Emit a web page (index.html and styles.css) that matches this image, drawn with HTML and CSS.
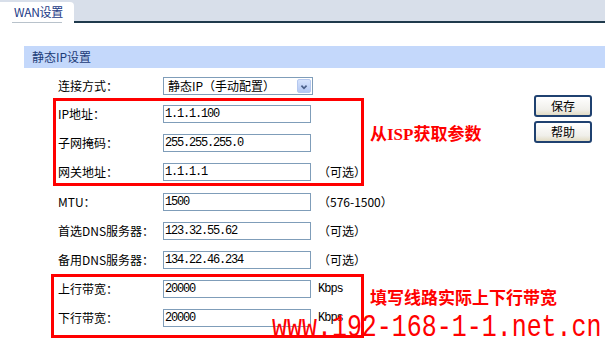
FILE: index.html
```html
<!DOCTYPE html>
<html lang="zh-CN">
<head>
    <meta charset="UTF-8">
    <meta name="viewport" content="width=device-width, initial-scale=1.0">
    <title>WAN设置</title>
    <link rel="stylesheet" href="styles.css">
</head>
<body>
    <div class="tabbar">
        <div class="tab"><span class="tab-label">WAN设置</span></div>
    </div>

    <div class="panel">
        <div class="panel-title">静态IP设置</div>

        <div class="panel-body">
            <div class="form">
                <div class="row">
                    <span class="row-label">连接方式：</span>
                    <div class="select">
                        <span class="select-text">静态IP（手动配置）</span>
                        <span class="select-btn">
                            <svg width="14" height="14" viewBox="0 0 14 14">
                                <polyline points="4,5.5 7,8.5 10,5.5" fill="none" stroke="#4a5f88" stroke-width="2"/>
                            </svg>
                        </span>
                    </div>
                </div>

                <!-- values handed out by the ISP -->
                <div class="group-line">
                    <div class="mark mark-isp">
                        <div class="row">
                            <span class="row-label">IP地址：</span>
                            <input class="field" type="text" value="1.1.1.100">
                        </div>
                        <div class="row">
                            <span class="row-label">子网掩码：</span>
                            <input class="field" type="text" value="255.255.255.0">
                        </div>
                        <div class="row">
                            <span class="row-label">网关地址：</span>
                            <input class="field" type="text" value="1.1.1.1">
                            <span class="row-note">（可选）</span>
                        </div>
                    </div>
                    <div class="callout callout-isp">从ISP获取参数</div>
                </div>

                <div class="plain">
                    <div class="row">
                        <span class="row-label">MTU：</span>
                        <input class="field" type="text" value="1500">
                        <span class="row-note">（576-1500）</span>
                    </div>
                    <div class="row">
                        <span class="row-label">首选DNS服务器：</span>
                        <input class="field" type="text" value="123.32.55.62">
                        <span class="row-note">（可选）</span>
                    </div>
                    <div class="row">
                        <span class="row-label">备用DNS服务器：</span>
                        <input class="field" type="text" value="134.22.46.234">
                        <span class="row-note">（可选）</span>
                    </div>
                </div>

                <!-- line bandwidth -->
                <div class="group-line">
                    <div class="mark mark-bw">
                        <div class="row">
                            <span class="row-label">上行带宽：</span>
                            <input class="field" type="text" value="20000">
                            <span class="row-unit">Kbps</span>
                        </div>
                        <div class="row">
                            <span class="row-label">下行带宽：</span>
                            <input class="field" type="text" value="20000">
                            <span class="row-unit">Kbps</span>
                        </div>
                    </div>
                    <div class="callout callout-bw">填写线路实际上下行带宽</div>
                </div>
            </div>

            <div class="actions">
                <button class="btn" type="button">保存</button>
                <button class="btn" type="button">帮助</button>
            </div>
        </div>
    </div>

    <div class="watermark">www.192-168-1-1.net.cn</div>
</body>
</html>
```

FILE: styles.css
```css
* {
    margin: 0;
    padding: 0;
    box-sizing: border-box;
}

body {
    font-family: "Noto Sans CJK SC", "Liberation Sans", sans-serif;
    font-size: 12px;
    line-height: 16px;
    color: #000000;
    background: #ffffff;
    width: 605px;
    height: 345px;
    overflow: hidden;
    position: relative;
}

/* top tab strip */
.tabbar {
    height: 23px;
    background: #d8dfea;
    border-bottom: 2px solid #1f3a4c;
    display: flex;
    align-items: flex-start;
}

.tab {
    width: 74px;
    height: 21px;
    margin-top: 2px;
    background: #ffffff;
    border-top-right-radius: 4px;
    padding-left: 12px;
}

.tab-label {
    display: block;
    width: 50px;
    padding: 2px 0 2px 2px;
    line-height: 16px;
    color: #1c3a86;
    white-space: nowrap;
    letter-spacing: -0.3px;
    border-bottom: 1px solid #b8c2cb;
}

/* panel */
.panel {
    margin: 23px 0 0 24px;
}

.panel-title {
    height: 22px;
    line-height: 22px;
    padding-left: 8px;
    background: #c4d8fb;
    color: #1c3b78;
}

.panel-body {
    display: flex;
    padding-left: 27px;
}

.form {
    flex: 1;
    min-width: 0;
    padding-top: 9px;
}

.row {
    display: flex;
    align-items: center;
    height: 18px;
    white-space: nowrap;
}

.row + .row {
    margin-top: 11px;
}

.form > .row {
    padding-left: 7px;
}

.row-label {
    width: 105px;
    flex-shrink: 0;
}

.field {
    width: 148px;
    flex-shrink: 0;
    height: 18px;
    border: 1px solid #7f9db9;
    padding: 0 0 0 1px;
    font-family: "Liberation Mono", monospace;
    font-size: 12px;
    letter-spacing: -1.2px;
    color: #000000;
    background: #ffffff;
    outline: none;
}

.row-note {
    margin-left: 7px;
}

.row-unit {
    margin-left: 7px;
    font-family: "Liberation Mono", monospace;
    font-size: 12px;
    letter-spacing: -1px;
}

/* fake drop-down */
.select {
    width: 150px;
    flex-shrink: 0;
    height: 18px;
    border: 1px solid #7f9db9;
    display: flex;
    align-items: center;
    justify-content: space-between;
    padding: 0 1px 0 4px;
}

.select-btn {
    width: 14px;
    height: 14px;
    border: 1px solid #b5c8ef;
    border-radius: 2px;
    background: linear-gradient(#d6e3fc, #b3c8f3);
    display: flex;
}

/* red annotation boxes */
.group-line {
    display: flex;
    align-items: center;
}

.mark {
    flex-shrink: 0;
    border: 3px solid #ff0000;
}

.mark-isp {
    width: 311px;
    margin: 3px 0 0 2px;
    padding: 4px 0 2px 2px;
}

.mark-bw {
    width: 313px;
    margin-top: 5px;
    padding: 3px 0 8px 4px;
}

.plain {
    margin-top: 7px;
    padding-left: 7px;
}

.callout {
    margin-left: 6px;
    font-family: "Liberation Serif", "Noto Sans CJK SC", serif;
    font-weight: bold;
    font-size: 17px;
    line-height: 20px;
    color: #ff0000;
    white-space: nowrap;
}

.callout-isp {
    margin-bottom: 12px;
}

.callout-bw {
    margin-bottom: 10px;
}

/* buttons */
.actions {
    display: flex;
    flex-direction: column;
    flex-shrink: 0;
    gap: 4px;
    margin: 27px 13px 0 0;
}

.btn {
    width: 58px;
    height: 22px;
    border: 2px solid #1f4170;
    border-radius: 3px;
    background: linear-gradient(#ffffff, #f0efea 70%, #e2dcc4);
    font-family: "Noto Sans CJK SC", sans-serif;
    font-size: 12px;
    line-height: 16px;
    color: #000000;
}

/* site watermark laid over the shot */
.watermark {
    position: absolute;
    left: 272px;
    top: 312px;
    font-family: "Liberation Mono", monospace;
    font-size: 32px;
    line-height: 32px;
    color: #ff0000;
    white-space: nowrap;
    transform: scaleX(0.78);
    transform-origin: left top;
}
```
